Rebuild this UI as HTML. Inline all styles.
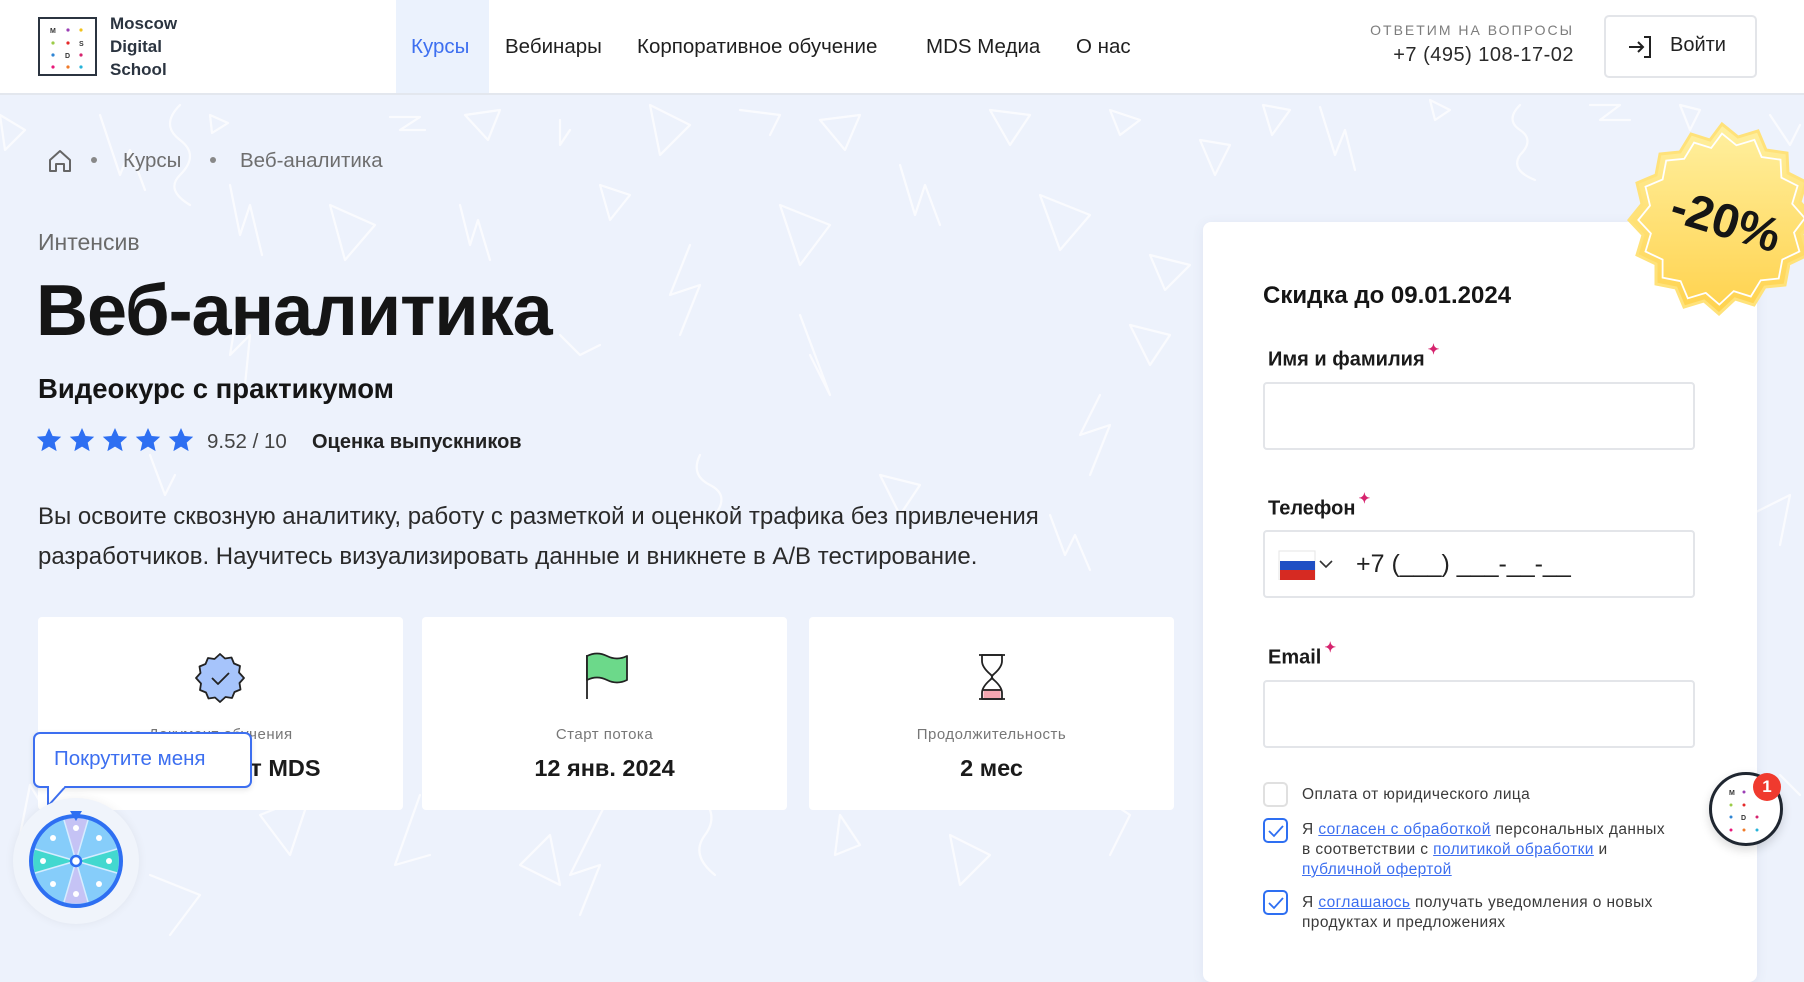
<!DOCTYPE html>
<html><head><meta charset="utf-8">
<style>
*{margin:0;padding:0;box-sizing:border-box}
body{width:1804px;height:953px;overflow:hidden;background:#edf2fc;font-family:"Liberation Sans","Noto Sans CJK SC",sans-serif;color:#1a1a1a;position:relative}
.abs{position:absolute}
header{position:absolute;left:0;top:0;width:1804px;height:95px;background:#fff;border-bottom:2px solid #e3e7ee}
.nav{position:absolute;top:0;height:93px;line-height:93px;font-size:20.5px;color:#1f1f1f;white-space:nowrap}
.card{position:absolute;top:617px;width:365px;height:193px;background:#fff;border-radius:4px;text-align:center}
.card .lab{position:absolute;width:100%;font-size:15px;color:#777;letter-spacing:.5px}
.lbl{position:absolute;left:1268px;font-size:20px;font-weight:bold;color:#1a1a1a}
.lbl sup{color:#d6246e;font-size:14px;position:relative;top:-4px;margin-left:3px}
.inp{position:absolute;left:1263px;width:432px;height:68px;border:2px solid #e3e5e9;border-radius:4px;background:#fff}
.cb{position:absolute;left:1263px;width:25px;height:25px;border:2px solid #e0e0e0;border-radius:5px;background:#fff}
.cb.on{border-color:#2e6ff2}
.ct{position:absolute;left:1302px;font-size:15.5px;color:#3a3a3a;line-height:20px;letter-spacing:.4px}
.ct a{color:#3d6ff0;text-decoration:underline}
</style></head><body>

<svg class="abs" style="left:0;top:95px" width="1804" height="858" fill="none" stroke="#fff" stroke-width="2.2" stroke-linejoin="round" stroke-linecap="round" opacity=".75">
<path d="M0 20 L25 35 L5 55Z"/><path d="M100 20 L120 80 L130 55 L145 95"/><path d="M180 10 Q160 30 180 45 Q200 60 180 80 Q165 95 190 110"/><path d="M210 20 L228 28 L212 38Z"/><path d="M390 22 L420 22 L400 35 L425 35"/><path d="M465 20 L500 15 L488 45Z"/><path d="M560 25 L560 50 L570 35"/><path d="M650 10 L690 30 L660 60Z"/><path d="M740 15 L780 20 L770 40"/><path d="M820 25 L860 20 L845 55Z"/><path d="M900 70 L915 120 L925 90 L940 130"/><path d="M990 15 L1030 20 L1010 50Z"/><path d="M1110 15 L1140 25 L1120 40Z"/><path d="M1200 45 L1230 50 L1215 80Z"/><path d="M1263 10 L1290 15 L1272 40Z"/><path d="M1320 12 L1335 60 L1345 35 L1355 75"/><path d="M1430 5 L1450 15 L1435 25Z"/><path d="M1520 10 Q1505 25 1520 35 Q1535 45 1520 60 Q1510 75 1535 85"/><path d="M1590 10 L1620 10 L1600 25 L1630 25"/><path d="M1680 10 L1700 15 L1690 35Z"/><path d="M1770 20 L1790 50 L1800 30"/>
<path d="M230 90 L240 140 L250 110 L262 160"/><path d="M330 110 L375 130 L345 165Z"/><path d="M460 110 L470 150 L478 125 L490 165"/><path d="M600 90 L630 100 L610 125Z"/><path d="M780 110 L830 130 L800 170Z"/><path d="M1040 100 L1090 120 L1060 155Z"/><path d="M1150 160 L1190 170 L1165 195Z"/><path d="M690 150 L670 200 L700 190 L680 240"/>
<path d="M240 200 L230 260 L250 240 L245 290"/><path d="M560 240 L580 260 L600 250"/><path d="M800 220 L830 300 L810 260"/><path d="M1130 230 L1170 240 L1150 270Z"/><path d="M1100 300 L1080 340 L1110 330 L1090 380"/><path d="M700 360 Q690 380 710 390 Q730 400 715 420"/><path d="M880 380 L920 390 L900 420Z"/><path d="M1050 420 L1065 460 L1075 440 L1090 475"/><path d="M150 360 L165 400 L175 380"/><path d="M1770 160 L1790 170 L1775 190"/><path d="M1750 420 L1790 400 L1780 450"/>
<path d="M30 690 L60 740 L20 740Z"/><path d="M260 720 L310 700 L290 760Z"/><path d="M420 700 L395 770 L430 760"/><path d="M550 740 L520 770 L560 790Z"/><path d="M610 700 L570 780 L600 770 L580 820"/><path d="M700 700 Q720 720 705 740 Q690 760 715 780"/><path d="M840 720 L860 750 L835 760Z"/><path d="M950 740 L990 760 L960 790Z"/><path d="M1100 700 L1130 720 L1110 760"/><path d="M150 780 L200 800 L170 840"/><path d="M1780 680 L1800 700"/>
</svg>

<header>
<div class="abs" style="left:38px;top:17px;width:59px;height:59px;border:2.5px solid #2b3440"></div>
<svg class="abs" style="left:38px;top:17px" width="59" height="59" font-family="Liberation Sans" font-size="7" font-weight="bold" fill="#333">
<text x="12" y="16">M</text><circle cx="30" cy="13" r="1.6" fill="#9b3fb5"/><circle cx="43" cy="13" r="1.6" fill="#f2c21b"/>
<circle cx="15" cy="26" r="1.6" fill="#9ccc48"/><circle cx="30" cy="26" r="1.6" fill="#e52a2a"/><text x="41" y="29">S</text>
<circle cx="15" cy="38" r="1.6" fill="#2f85d4"/><text x="27" y="41">D</text><circle cx="43" cy="38" r="1.6" fill="#d6246e"/>
<circle cx="15" cy="50" r="1.6" fill="#e8197a"/><circle cx="30" cy="50" r="1.6" fill="#f07b2a"/><circle cx="43" cy="50" r="1.6" fill="#26b3d9"/>
</svg>
<div class="abs" style="left:110px;top:12px;font-size:17px;font-weight:bold;line-height:23px;color:#2b3440">Moscow<br>Digital<br>School</div>
<div class="abs" style="left:396px;top:0;width:93px;height:93px;background:#ebf2fd"></div>
<div class="nav" style="left:411px;color:#3d6ff0">Курсы</div>
<div class="nav" style="left:505px">Вебинары</div>
<div class="nav" style="left:637px">Корпоративное обучение</div>
<div class="nav" style="left:926px">MDS Медиа</div>
<div class="nav" style="left:1076px">О нас</div>
<div class="abs" style="right:230px;top:22px;font-size:14px;letter-spacing:2px;color:#7d7d7d;text-align:right">ОТВЕТИМ НА ВОПРОСЫ</div>
<div class="abs" style="right:230px;top:44px;font-size:20px;color:#2a2a2a;text-align:right;letter-spacing:.5px">+7 (495) 108-17-02</div>
<div class="abs" style="left:1604px;top:15px;width:153px;height:63px;border:2px solid #e3e5e9;border-radius:5px"></div>
<svg class="abs" style="left:1627px;top:35px" width="26" height="24" fill="none" stroke="#222" stroke-width="2"><path d="M2 12H16M11 7l5 5-5 5M17 2h6v20h-6"/></svg>
<div class="abs" style="left:1670px;top:34px;font-size:20px;color:#222">Войти</div>
</header>

<svg class="abs" style="left:47px;top:149px" width="26" height="24" fill="none" stroke="#666" stroke-width="2" stroke-linejoin="round"><path d="M3 11L13 2l10 9v11h-6v-7h-8v7H3z"/></svg>
<div class="abs" style="left:91px;top:157px;width:6px;height:6px;border-radius:50%;background:#888"></div>
<div class="abs" style="left:123px;top:149px;font-size:20.5px;color:#6e6e6e">Курсы</div>
<div class="abs" style="left:210px;top:157px;width:6px;height:6px;border-radius:50%;background:#888"></div>
<div class="abs" style="left:240px;top:149px;font-size:20.5px;color:#6e6e6e">Веб-аналитика</div>

<div class="abs" style="left:38px;top:229px;font-size:23px;color:#6a6a6a">Интенсив</div>
<div class="abs" style="left:36px;top:270px;font-size:72px;font-weight:bold;color:#151515;letter-spacing:-1px">Веб-аналитика</div>
<div class="abs" style="left:38px;top:373px;font-size:27.5px;font-weight:bold;color:#151515">Видеокурс с практикумом</div>
<svg class="abs" style="left:36px;top:427px" width="165" height="28" fill="#2e6ff2">
<defs><path id="s" d="M13 1l3.6 8 8.6.8-6.5 5.8 1.9 8.5L13 19.6 5.4 24.1l1.9-8.5L.8 9.8l8.6-.8z"/></defs>
<use href="#s"/><use href="#s" x="33"/><use href="#s" x="66"/><use href="#s" x="99"/><use href="#s" x="132"/></svg>
<div class="abs" style="left:207px;top:430px;font-size:20.5px;color:#444">9.52 / 10</div>
<div class="abs" style="left:312px;top:431px;font-size:20px;font-weight:bold;color:#222">Оценка выпускников</div>
<div class="abs" style="left:38px;top:497px;font-size:24px;line-height:40px;color:#2a2a2a;width:1060px">Вы освоите сквозную аналитику, работу с разметкой и оценкой трафика без привлечения разработчиков. Научитесь визуализировать данные и вникнете в A/B тестирование.</div>

<div class="card" style="left:38px">
<svg class="abs" style="left:156px;top:35px" width="52" height="52" fill="#a6c4fb" stroke="#222" stroke-width="1.8" stroke-linejoin="round"><path d="M26 2l5 4.5 6.5-1 2.5 6 6 2.5-1 6.5L50 26l-4.5 5 1 6.5-6 2.5-2.5 6-6.5-1L26 50l-5-4.5-6.5 1-2.5-6-6-2.5 1-6.5L2 26l4.5-5-1-6.5 6-2.5 2.5-6 6.5 1z"/><path d="M18 26l6 6 11-11" fill="none"/></svg>
<div class="lab" style="top:109px">Документ обучения</div>
<div class="abs" style="top:138px;width:100%;font-size:23.5px;font-weight:bold">Сертификат MDS</div>
</div>
<div class="card" style="left:422px">
<svg class="abs" style="left:160px;top:35px" width="48" height="50" stroke="#222" stroke-width="1.8" stroke-linejoin="round"><path d="M5 3v44" fill="none"/><path d="M5 4q10-5 20 0t20 0v24q-10 5-20 0t-20 0z" fill="#6cd98a"/></svg>
<div class="lab" style="top:109px">Старт потока</div>
<div class="abs" style="top:138px;width:100%;font-size:23.5px;font-weight:bold">12 янв. 2024</div>
</div>
<div class="card" style="left:809px">
<svg class="abs" style="left:164px;top:35px" width="38" height="50" stroke="#222" stroke-width="1.8" stroke-linejoin="round"><path d="M9 3h20v6q0 6-8 13q-2 1.5-2 3t2 3q8 7 8 13v6H9v-6q0-6 8-13q2-1.5 2-3t-2-3q-8-7-8-13z" fill="#fff"/><path d="M10.5 37h17v9h-17z" fill="#f4a6b0" stroke="none"/><path d="M9 38h20" fill="none"/><path d="M6 3h26M6 47h26" fill="none"/></svg>
<div class="lab" style="top:109px">Продолжительность</div>
<div class="abs" style="top:138px;width:100%;font-size:23.5px;font-weight:bold">2 мес</div>
</div>

<!-- tooltip + wheel -->
<div class="abs" style="left:33px;top:732px;width:219px;height:56px;border:2px solid #3d6ff0;border-radius:7px;background:#fff;box-shadow:0 2px 6px rgba(0,0,0,.1)"></div>
<svg class="abs" style="left:46px;top:786px" width="30" height="22"><path d="M2 0v20L20 0" fill="#fff" stroke="#3d6ff0" stroke-width="2"/><path d="M4 0h14" stroke="#fff" stroke-width="3"/></svg>
<div class="abs" style="left:54px;top:747px;font-size:20.5px;color:#3d6ff0">Покрутите меня</div>
<div class="abs" style="left:13px;top:798px;width:126px;height:126px;border-radius:50%;background:#f0f4fb;box-shadow:0 0 10px rgba(0,0,0,.06)"></div>
<svg class="abs" style="left:28px;top:808px" width="100" height="104">
<g transform="translate(48,53)">
<circle r="45" fill="#86cdfa" stroke="#2e6ff2" stroke-width="4"/>
<path d="M0 0L-12 -41A43 43 0 0 1 12 -41Z" fill="#c5c3f5"/><path d="M0 0L-12 41A43 43 0 0 0 12 41Z" fill="#c5c3f5"/>
<path d="M0 0L-41 -12A43 43 0 0 0 -41 12Z" fill="#43d8cf"/><path d="M0 0L41 -12A43 43 0 0 1 41 12Z" fill="#43d8cf"/>
<g stroke="#d6ecff" stroke-width="1.5"><path d="M0 0L-12-41M0 0L12-41M0 0L-12 41M0 0L12 41M0 0L-41-12M0 0L-41 12M0 0L41-12M0 0L41 12"/></g>
<g fill="#fff"><circle cx="0" cy="-33" r="3"/><circle cx="0" cy="33" r="3"/><circle cx="-33" cy="0" r="3"/><circle cx="33" cy="0" r="3"/><circle cx="-23" cy="-23" r="3"/><circle cx="23" cy="-23" r="3"/><circle cx="-23" cy="23" r="3"/><circle cx="23" cy="23" r="3"/></g>
<circle r="5" fill="#fff" stroke="#2e6ff2" stroke-width="2.5"/>
<path d="M-6 -50h12l-6 10z" fill="#2e6ff2"/>
</g></svg>

<!-- form -->
<div class="abs" style="left:1203px;top:222px;width:554px;height:760px;background:#fff;border-radius:8px;box-shadow:0 2px 12px rgba(60,80,120,.08)"></div>
<div class="abs" style="left:1263px;top:282px;font-size:24px;font-weight:bold;color:#151515">Скидка до 09.01.2024</div>
<div class="lbl" style="top:345px">Имя и фамилия<sup>✦</sup></div>
<div class="inp" style="top:382px"></div>
<div class="lbl" style="top:494px">Телефон<sup>✦</sup></div>
<div class="inp" style="top:530px"></div>
<svg class="abs" style="left:1278px;top:550px" width="58" height="30"><rect x="1" y="1" width="36" height="29" fill="#fff" stroke="#e5e5e5"/><rect x="2" y="11" width="35" height="10" fill="#1f4fc4"/><rect x="2" y="20" width="35" height="10" fill="#d62a22"/><path d="M42 11l6 6 6-6" fill="none" stroke="#333" stroke-width="1.6"/></svg>
<div class="abs" style="left:1356px;top:550px;font-size:25px;color:#222">+7 (___) ___-__-__</div>
<div class="lbl" style="top:643px">Email<sup>✦</sup></div>
<div class="inp" style="top:680px"></div>
<div class="cb" style="top:782px"></div>
<div class="ct" style="top:785px">Оплата от юридического лица</div>
<div class="cb on" style="top:818px"></div>
<svg class="abs" style="left:1268px;top:824px" width="16" height="14" fill="none" stroke="#2e6ff2" stroke-width="1.8"><path d="M1 7l5 5 9-10"/></svg>
<div class="ct" style="top:820px">Я <a>согласен с обработкой</a> персональных данных<br>в соответствии с <a>политикой обработки</a> и<br><a>публичной офертой</a></div>
<div class="cb on" style="top:890px"></div>
<svg class="abs" style="left:1268px;top:896px" width="16" height="14" fill="none" stroke="#2e6ff2" stroke-width="1.8"><path d="M1 7l5 5 9-10"/></svg>
<div class="ct" style="top:893px">Я <a>соглашаюсь</a> получать уведомления о новых<br>продуктах и предложениях</div>

<!-- badge -->
<svg class="abs" style="left:1624px;top:120px" width="200" height="200">
<defs><linearGradient id="g" x1="0" y1="0" x2="0" y2="1"><stop offset="0" stop-color="#fff0a0"/><stop offset="1" stop-color="#ffd24d"/></linearGradient></defs>
<g transform="translate(98,100)">
<polygon fill="url(#g)" stroke="#ffe27a" stroke-width="3" points="0,-96 16,-83 36,-89 44,-70 65,-67 66,-47 84,-38 78,-18 92,-2 80,14 86,35 67,44 63,65 43,67 32,85 13,79 -3,94 -18,81 -38,87 -46,68 -66,64 -66,44 -85,35 -79,15 -93,0 -80,-16 -85,-37 -66,-45 -62,-66 -42,-68 -31,-86 -12,-80"/>
<polygon fill="none" stroke="#fff" stroke-width="2" transform="scale(.9)" points="0,-96 16,-83 36,-89 44,-70 65,-67 66,-47 84,-38 78,-18 92,-2 80,14 86,35 67,44 63,65 43,67 32,85 13,79 -3,94 -18,81 -38,87 -46,68 -66,64 -66,44 -85,35 -79,15 -93,0 -80,-16 -85,-37 -66,-45 -62,-66 -42,-68 -31,-86 -12,-80"/>
<text x="4" y="16" text-anchor="middle" font-family="Liberation Sans" font-weight="bold" font-size="48" fill="#151515" transform="rotate(17)">-20%</text>
</g></svg>

<!-- chat bubble -->
<div class="abs" style="left:1709px;top:772px;width:74px;height:74px;border-radius:50%;background:#fff;border:3px solid #1f2630;box-shadow:0 4px 10px rgba(0,0,0,.15)"></div>
<svg class="abs" style="left:1709px;top:772px" width="74" height="74" font-family="Liberation Sans" font-size="7" font-weight="bold" fill="#333">
<text x="20" y="23">M</text><circle cx="35" cy="20" r="1.5" fill="#9b3fb5"/>
<circle cx="22" cy="33" r="1.5" fill="#9ccc48"/><circle cx="35" cy="33" r="1.5" fill="#e52a2a"/>
<circle cx="22" cy="45" r="1.5" fill="#2f85d4"/><text x="32" y="48">D</text><circle cx="48" cy="45" r="1.5" fill="#d6246e"/>
<circle cx="22" cy="58" r="1.5" fill="#e8197a"/><circle cx="35" cy="58" r="1.5" fill="#f07b2a"/><circle cx="48" cy="58" r="1.5" fill="#26b3d9"/>
</svg>
<div class="abs" style="left:1753px;top:773px;width:28px;height:28px;border-radius:50%;background:#f03a2e;color:#fff;font-size:17px;font-weight:bold;text-align:center;line-height:28px">1</div>
</body></html>
